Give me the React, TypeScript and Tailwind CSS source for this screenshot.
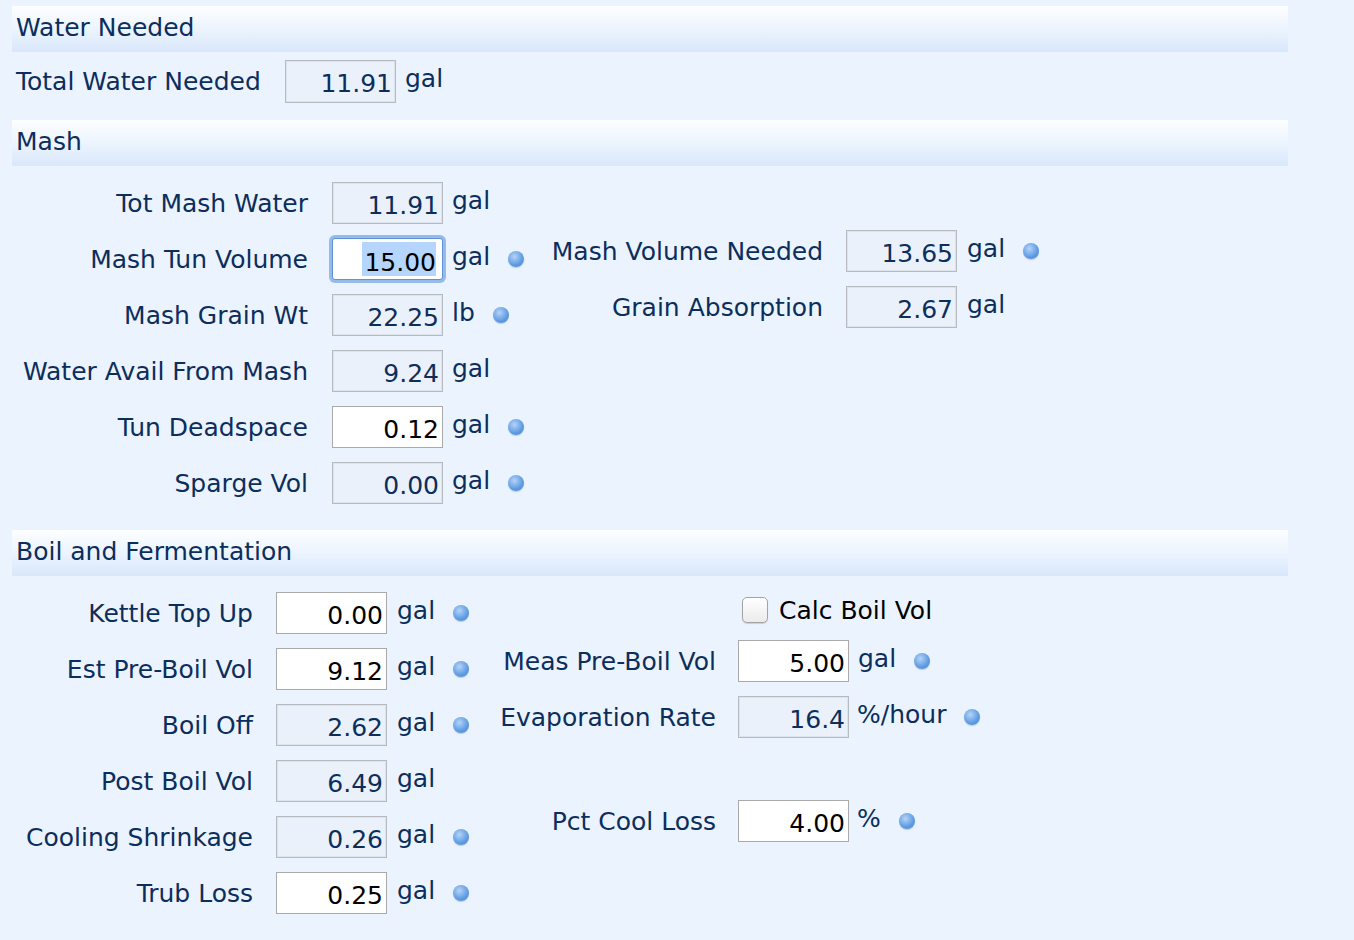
import React from "react";

const navy = "text-[#0c2e5c]";

function Header({ title }: { title: string }) {
    return (
        <div className="ml-[12px] w-[1276px] h-[46px] pl-[4px] pt-[7px] bg-linear-to-b from-[#fdfeff] via-[#ecf4fe] to-[#d8e7fb]">
            <span className={`text-[25px] leading-[29px] ${navy}`}>{title}</span>
        </div>
    );
}

function Dot() {
    return (
        <span className="ml-[18px] h-[16px] w-[16px] shrink-0 rounded-full bg-[radial-gradient(circle_at_40%_35%,#b4d4f8,#5d9ae2_60%,#4a85d2)] shadow-[0_1px_1px_rgba(40,80,140,0.25)]" />
    );
}

type FieldProps = {
    label: string;
    value: string;
    unit?: string;
    editable?: boolean;
    focused?: boolean;
    dot?: boolean;
    labelW: string;
    gap?: string;
    unitGap?: string;
};

function Field({ label, value, unit, editable, focused, dot, labelW, gap = "ml-[24px]", unitGap = "ml-[9px]" }: FieldProps) {
    return (
        <div className="flex h-[42px] items-center">
            <div className={`${labelW} shrink-0 text-right text-[25px] leading-[29px] ${navy}`}>{label}</div>
            {focused ? (
                <div className={`${gap} flex h-[42px] w-[111px] shrink-0 items-center justify-end rounded-[3px] border border-[#5f93d4] bg-white pr-[6px] text-[25px] leading-[29px] text-black shadow-[0_0_0_3px_rgba(120,168,228,0.75)]`}>
                    <span className="inline-flex h-[34px] items-center bg-[#b5d5fd] pl-[2px] pt-[6px]">{value}</span>
                </div>
            ) : (
                <div
                    className={
                        `${gap} flex h-[42px] w-[111px] shrink-0 items-center justify-end pr-[3px] pt-[5px] text-[25px] leading-[29px] ` +
                        (editable
                            ? "border border-[#a9a9a9] bg-white text-black"
                            : `border border-[#b7bbc0] bg-[#eaf1fb] shadow-[inset_0_0_0_1px_#dde3ea] ${navy}`)
                    }
                >
                    {value}
                </div>
            )}
            {unit && <span className={`${unitGap} mb-[6px] text-[25px] leading-[29px] ${navy}`}>{unit}</span>}
            {dot && <Dot />}
        </div>
    );
}

export default function App() {
    return (
        <div className="min-h-[940px] w-full bg-[#ebf3fe] pt-[6px]" style={{ fontFamily: '"DejaVu Sans", "Liberation Sans", sans-serif' }}>
            <Header title="Water Needed" />
            <div className="ml-[16px] mt-[8px] flex h-[42px] items-center">
                <div className={`w-[269px] text-[25px] leading-[29px] ${navy}`}>Total Water Needed</div>
                <div className={`flex h-[43px] w-[111px] items-center justify-end border border-[#b7bbc0] bg-[#eaf1fb] pr-[3px] pt-[5px] text-[25px] leading-[29px] shadow-[inset_0_0_0_1px_#dde3ea] ${navy}`}>
                    11.91
                </div>
                <span className={`ml-[9px] mb-[6px] text-[25px] leading-[29px] ${navy}`}>gal</span>
            </div>

            <div className="mt-[18px]">
                <Header title="Mash" />
            </div>
            <div className="ml-[12px] mt-[16px] flex">
                <div className="flex w-[528px] flex-col gap-[14px]">
                    <Field labelW="w-[296px]" label="Tot Mash Water" value="11.91" unit="gal" />
                    <Field labelW="w-[296px]" label="Mash Tun Volume" value="15.00" unit="gal" focused dot />
                    <Field labelW="w-[296px]" label="Mash Grain Wt" value="22.25" unit="lb" dot />
                    <Field labelW="w-[296px]" label="Water Avail From Mash" value="9.24" unit="gal" />
                    <Field labelW="w-[296px]" label="Tun Deadspace" value="0.12" unit="gal" editable dot />
                    <Field labelW="w-[296px]" label="Sparge Vol" value="0.00" unit="gal" dot />
                </div>
                <div className="mt-[48px] flex flex-col gap-[14px]">
                    <Field labelW="w-[283px]" gap="ml-[23px]" unitGap="ml-[10px]" label="Mash Volume Needed" value="13.65" unit="gal" dot />
                    <Field labelW="w-[283px]" gap="ml-[23px]" unitGap="ml-[10px]" label="Grain Absorption" value="2.67" unit="gal" />
                </div>
            </div>

            <div className="mt-[26px]">
                <Header title="Boil and Fermentation" />
            </div>
            <div className="ml-[12px] mt-[16px] flex">
                <div className="flex w-[468px] flex-col gap-[14px]">
                    <Field labelW="w-[241px]" gap="ml-[23px]" unitGap="ml-[10px]" label="Kettle Top Up" value="0.00" unit="gal" editable dot />
                    <Field labelW="w-[241px]" gap="ml-[23px]" unitGap="ml-[10px]" label="Est Pre-Boil Vol" value="9.12" unit="gal" editable dot />
                    <Field labelW="w-[241px]" gap="ml-[23px]" unitGap="ml-[10px]" label="Boil Off" value="2.62" unit="gal" dot />
                    <Field labelW="w-[241px]" gap="ml-[23px]" unitGap="ml-[10px]" label="Post Boil Vol" value="6.49" unit="gal" />
                    <Field labelW="w-[241px]" gap="ml-[23px]" unitGap="ml-[10px]" label="Cooling Shrinkage" value="0.26" unit="gal" dot />
                    <Field labelW="w-[241px]" gap="ml-[23px]" unitGap="ml-[10px]" label="Trub Loss" value="0.25" unit="gal" editable dot />
                </div>
                <div className="flex flex-col">
                    <div className="flex h-[42px] items-center pl-[262px] pb-[6px]">
                        <span className="h-[26px] w-[26px] rounded-[5px] border border-[#a3a3a3] bg-linear-to-b from-white to-[#ebebeb] shadow-[0_1px_1px_rgba(0,0,0,0.15)]" />
                        <span className="ml-[11px] text-[25px] leading-[29px] text-black">Calc Boil Vol</span>
                    </div>
                    <div className="mt-[6px]">
                        <Field labelW="w-[236px]" gap="ml-[22px]" unitGap="ml-[9px]" label="Meas Pre-Boil Vol" value="5.00" unit="gal" editable dot />
                    </div>
                    <div className="mt-[14px]">
                        <Field labelW="w-[236px]" gap="ml-[22px]" unitGap="ml-[8px]" label="Evaporation Rate" value="16.4" unit="%/hour" dot />
                    </div>
                    <div className="mt-[62px]">
                        <Field labelW="w-[236px]" gap="ml-[22px]" unitGap="ml-[8px]" label="Pct Cool Loss" value="4.00" unit="%" editable dot />
                    </div>
                </div>
            </div>
        </div>
    );
}
